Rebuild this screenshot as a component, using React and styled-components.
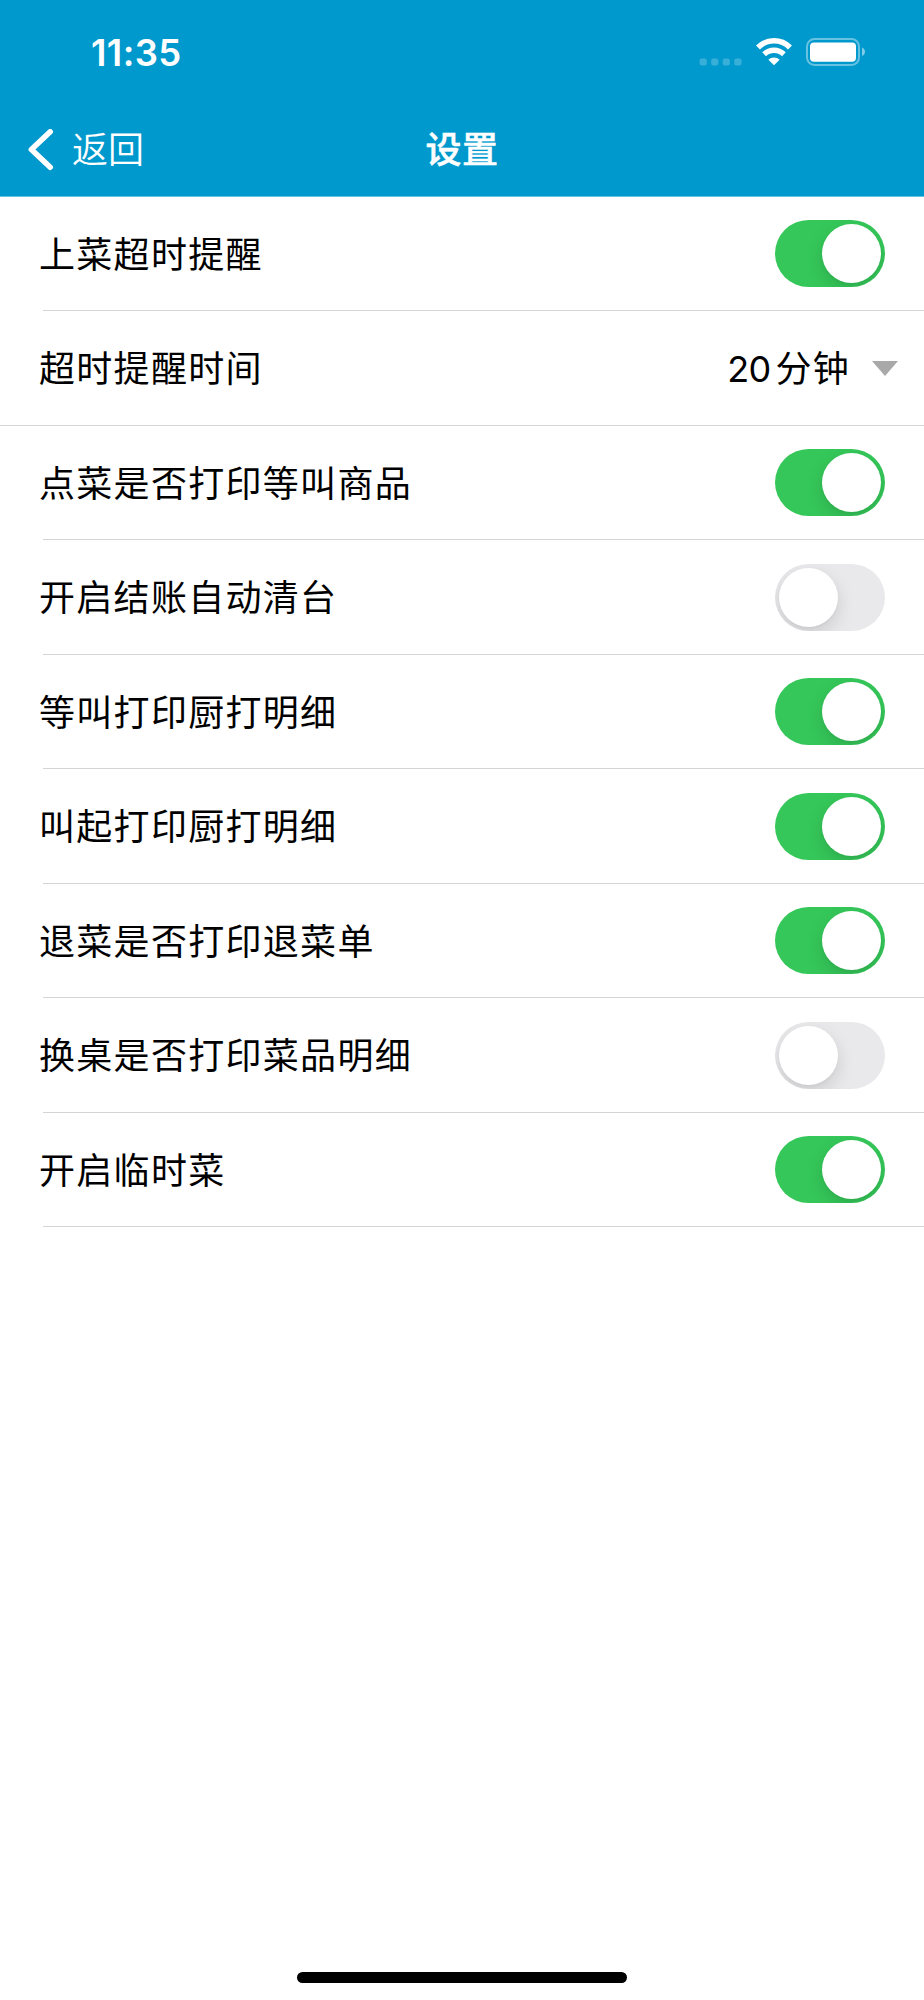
import React, { useState } from "react";
import styled, { createGlobalStyle } from "styled-components";

const GlobalStyle = createGlobalStyle`
  * {
    box-sizing: border-box;
  }

  body {
    margin: 0;
    background: #fff;
    font-family: Inter, "Noto Sans CJK SC", sans-serif;
    -webkit-font-smoothing: antialiased;
  }
`;

const Screen = styled.div`
  display: flex;
  flex-direction: column;
  width: 924px;
  height: 2000px;
  background: #fff;
  color: #000;
`;

// Header
const Header = styled.header`
  height: 196.8px;
  background: #0099cd;
  border-bottom: 1px solid #66c2e1;
  color: #fff;
`;

const StatusBar = styled.div`
  display: flex;
  justify-content: space-between;
  align-items: center;
  height: 106px;
  padding: 0 58px 0 91px;
`;

const Time = styled.span`
  font-size: 36.5px;
  font-weight: 600;
  line-height: 44px;
  letter-spacing: 0.4px;
`;

const StatusIcons = styled.div`
  display: flex;
  align-items: flex-end;
  height: 30px;
  padding-bottom: 2px;
`;

const SignalDots = styled.svg`
  width: 43px;
  height: 28px;
  margin-right: 13px;
`;

const WifiIcon = styled.svg`
  width: 38px;
  height: 28px;
  margin-right: 13px;
`;

const BatteryIcon = styled.svg`
  width: 60px;
  height: 28px;
`;

const NavBar = styled.div`
  display: grid;
  grid-template-columns: 1fr auto 1fr;
  align-items: center;
  height: 87px;
  padding: 0 28px;
`;

const BackButton = styled.button`
  display: flex;
  align-items: center;
  gap: 18px;
  padding: 0;
  border: none;
  background: none;
  color: inherit;
  font-family: inherit;
  font-size: 36px;
  font-weight: 350;
  line-height: 48px;
  cursor: pointer;
`;

const BackArrow = styled.svg`
  width: 26px;
  height: 42px;
`;

const Title = styled.h1`
  margin: 0;
  font-size: 36px;
  font-weight: 500;
  line-height: 48px;
  letter-spacing: 0.6px;
  -webkit-text-stroke: 0.5px #fff;
`;

// Settings list
const List = styled.main`
  flex: 1;
`;

const Row = styled.div`
  display: flex;
  justify-content: space-between;
  align-items: center;
  height: 113.5px;
  padding: 0 ${({ $select }) => ($select ? "26px" : "39px")} 0 39px;
`;

const Divider = styled.div`
  height: 1px;
  margin-left: ${({ $full }) => ($full ? "0" : "43px")};
  background: #d4d4d4;
`;

const Label = styled.span`
  padding-top: 2px;
  font-size: 36px;
  line-height: 48px;
  letter-spacing: 1.3px;
`;

const Track = styled.button`
  display: flex;
  justify-content: ${({ $on }) => ($on ? "flex-end" : "flex-start")};
  align-items: center;
  width: 110px;
  height: 67px;
  padding: 4px;
  border: none;
  border-radius: 34px;
  overflow: hidden;
  background: ${({ $on }) => ($on ? "#35c759" : "#e9e9eb")};
  cursor: pointer;
`;

const Knob = styled.span`
  width: 59px;
  height: 59px;
  border-radius: 50%;
  background: #fff;
  box-shadow: 0 7px 18px rgba(0, 0, 0, 0.13), 0 2px 3px rgba(0, 0, 0, 0.03);
`;

const Select = styled.div`
  display: flex;
  align-items: center;
`;

const Amount = styled.span`
  margin-right: 5px;
  padding-top: 1px;
  font-size: 36px;
  line-height: 48px;
  letter-spacing: -0.8px;
`;

const Unit = styled(Label)`
  margin-right: 22px;
`;

const Caret = styled.svg`
  width: 26px;
  height: 15px;
`;

const HomeArea = styled.footer`
  display: flex;
  justify-content: center;
  padding-bottom: 17px;
`;

const HomeIndicator = styled.div`
  width: 330px;
  height: 11px;
  border-radius: 6px;
  background: #000;
`;

const settings = [
  { label: "上菜超时提醒", on: true },
  { label: "超时提醒时间", amount: "20", unit: "分钟" },
  { label: "点菜是否打印等叫商品", on: true },
  { label: "开启结账自动清台", on: false },
  { label: "等叫打印厨打明细", on: true },
  { label: "叫起打印厨打明细", on: true },
  { label: "退菜是否打印退菜单", on: true },
  { label: "换桌是否打印菜品明细", on: false },
  { label: "开启临时菜", on: true },
];

const Switch = ({ initial, label }) => {
  const [on, setOn] = useState(initial);

  return (
    <Track
      $on={on}
      role="switch"
      aria-checked={on}
      aria-label={label}
      onClick={() => setOn(!on)}
    >
      <Knob />
    </Track>
  );
};

const App = () => {
  return (
    <Screen>
      <GlobalStyle />
      <Header>
        <StatusBar>
          <Time>11:35</Time>
          <StatusIcons>
            <SignalDots viewBox="0 0 43 28" fill="#fff" fillOpacity="0.22">
              {[0.6, 12.2, 23.7, 35.3].map((x) => (
                <rect key={x} x={x} y="20.4" width="7.2" height="7.2" rx="2" />
              ))}
            </SignalDots>
            <WifiIcon viewBox="0 0 38 28" fill="none">
              <path
                d="M3 9.4C12 0.6 26 0.6 35 9.4"
                stroke="#fff"
                strokeWidth="5.6"
              />
              <path
                d="M9.1 16.3C14.8 10.9 23.2 10.9 28.9 16.3"
                stroke="#fff"
                strokeWidth="5.4"
              />
              <path
                d="M19 27.2L13.4 21.8C16.6 18.6 21.4 18.6 24.6 21.8Z"
                fill="#fff"
              />
            </WifiIcon>
            <BatteryIcon viewBox="0 0 60 28" fill="none">
              <rect
                x="1"
                y="1"
                width="52"
                height="26"
                rx="7.5"
                stroke="#fff"
                strokeOpacity="0.4"
                strokeWidth="2"
              />
              <rect x="4" y="4.4" width="46" height="19.4" rx="4" fill="#fff" />
              <path
                d="M56 9.5C60 11 60 16.5 56 18Z"
                fill="#fff"
                fillOpacity="0.5"
              />
            </BatteryIcon>
          </StatusIcons>
        </StatusBar>
        <NavBar>
          <BackButton>
            <BackArrow viewBox="0 0 26 42" fill="none">
              <path
                d="M22.2 2.8L3.4 20.5L22.2 38.2"
                stroke="#fff"
                strokeWidth="5.6"
                strokeLinecap="round"
                strokeLinejoin="round"
              />
            </BackArrow>
            返回
          </BackButton>
          <Title>设置</Title>
        </NavBar>
      </Header>

      <List>
        {settings.map(({ label, on, amount, unit }) => (
          <React.Fragment key={label}>
            <Row $select={!!amount}>
              <Label>{label}</Label>
              {amount ? (
                <Select>
                  <Amount>{amount}</Amount>
                  <Unit>{unit}</Unit>
                  <Caret viewBox="0 0 26 15">
                    <path d="M0 0H26L13 15Z" fill="#a9a9a9" />
                  </Caret>
                </Select>
              ) : (
                <Switch initial={on} label={label} />
              )}
            </Row>
            <Divider $full={!!amount} />
          </React.Fragment>
        ))}
      </List>

      <HomeArea>
        <HomeIndicator />
      </HomeArea>
    </Screen>
  );
};

export default App;
